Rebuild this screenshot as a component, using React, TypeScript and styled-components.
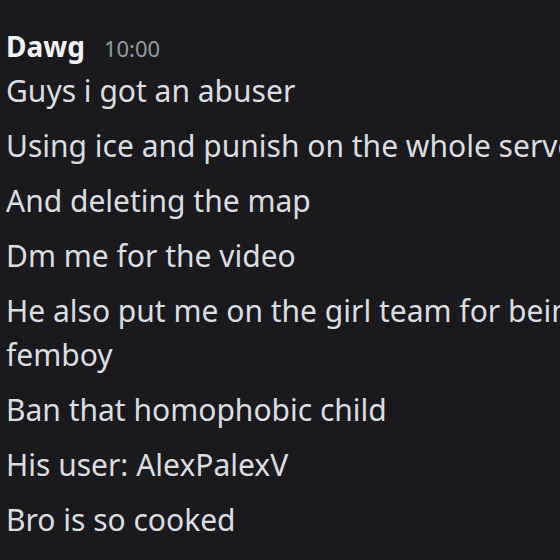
import * as React from 'react'
import styled, { createGlobalStyle } from 'styled-components'

const GlobalStyle = createGlobalStyle`
  html, body {
    margin: 0;
    padding: 0;
    background: #1a1a1e;
  }
`

const Chat = styled.div`
  width: 560px;
  height: 560px;
  overflow: hidden;
  box-sizing: border-box;
  padding: 27px 0 0 6px;
  font-family: "Noto Sans", "Open Sans", sans-serif;
  background: #1a1a1e;
`

const Header = styled.div`
  display: flex;
  align-items: baseline;
  gap: 19px;
  height: 42px;
`

const Author = styled.span`
  color: #f2f3f5;
  font-size: 28px;
  font-weight: 700;
`

const Time = styled.span`
  color: #949ba4;
  font-size: 22px;
`

const Messages = styled.div`
  display: flex;
  flex-direction: column;
  gap: 11px;
`

const Line = styled.div`
  color: #dbdee1;
  font-size: 30px;
  line-height: 44px;
  white-space: nowrap;
`

const lines: string[][] = [
  ['Guys i got an abuser'],
  ['Using ice and punish on the whole server'],
  ['And deleting the map'],
  ['Dm me for the video'],
  ['He also put me on the girl team for being a', 'femboy'],
  ['Ban that homophobic child'],
  ['His user: AlexPalexV'],
  ['Bro is so cooked'],
]

export default function App() {
  return (
    <Chat>
      <GlobalStyle />
      <Header>
        <Author>Dawg</Author>
        <Time>10:00</Time>
      </Header>
      <Messages>
        {lines.map((msg, i) => (
          <div key={i}>
            {msg.map((t, j) => (
              <Line key={j}>{t}</Line>
            ))}
          </div>
        ))}
      </Messages>
    </Chat>
  )
}
